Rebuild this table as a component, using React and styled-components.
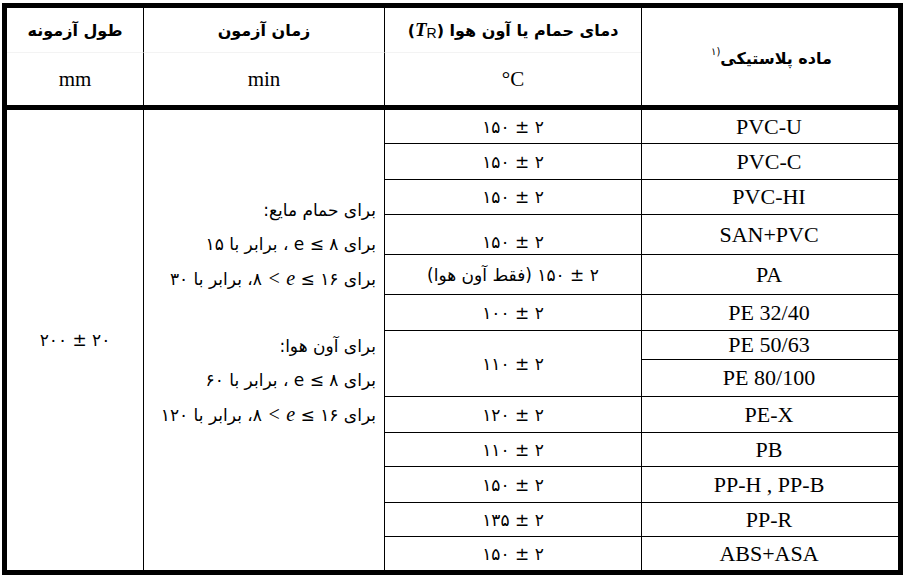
import React from 'react';
import styled, { createGlobalStyle } from 'styled-components';

const GlobalStyle = createGlobalStyle`
  html, body {
    margin: 0;
    padding: 0;
    background: #fff;
  }
`;

const fa = `"DejaVu Sans", "Noto Sans", sans-serif`;
const latin = `"Liberation Serif", "Times New Roman", serif`;

const Page = styled.div`
  padding: 3px 0 0 2px;
`;

const Table = styled.table`
  width: 901px;
  border: 5px solid #000;
  border-spacing: 0;
  border-collapse: separate;
  table-layout: fixed;
  color: #000;
  font-family: ${fa};
`;

const HeadRow = styled.tr`
  height: ${p => p.$h}px;
`;

const HeadCell = styled.th`
  padding: 0;
  box-sizing: border-box;
  border-left: ${p => (p.$edge ? 'none' : '1px solid #000')};
  border-bottom: ${p => (p.$thick ? '5px solid #000' : '1px solid #f3f3f3')};
  text-align: center;
  vertical-align: middle;
  font-family: ${fa};
  font-weight: bold;
  font-size: 16px;
`;

const Unit = styled.span`
  font-family: ${latin};
  font-weight: normal;
  font-size: 21px;
`;

const SymT = styled.span`
  font-family: ${latin};
  font-style: italic;
  font-size: 19px;
`;

const SymSub = styled.sub`
  font-family: "Liberation Sans", Arial, sans-serif;
  font-weight: normal;
  font-size: 14px;
  vertical-align: -2px;
`;

const Note = styled.sup`
  font-size: 10px;
  font-weight: normal;
  vertical-align: 9px;
  margin-left: 3px;
`;

const BodyRow = styled.tr`
  height: ${p => p.$h}px;
`;

const Cell = styled.td`
  padding: 0;
  box-sizing: border-box;
  border-left: ${p => (p.$edge ? 'none' : '1px solid #000')};
  border-bottom: ${p => (p.$last ? 'none' : '1px solid #000')};
  text-align: center;
  vertical-align: middle;
`;

const Material = styled(Cell)`
  font-family: ${latin};
  font-size: 22px;
`;

const Temp = styled(Cell)`
  font-family: ${fa};
  font-size: 17px;
  padding-top: ${p => p.$drop || 0}px;
`;

const TimeCell = styled(Cell)`
  vertical-align: top;
  text-align: right;
  padding: 83px 8px 0 0;
  font-size: 17px;
`;

const Line = styled.div`
  height: 34px;
  line-height: 34px;
  white-space: nowrap;
`;

const Math = styled.span`
  unicode-bidi: isolate;
`;

const E = styled.span`
  font-family: ${p => (p.$italic ? latin : fa)};
  font-style: ${p => (p.$italic ? 'italic' : 'normal')};
  font-size: ${p => (p.$italic ? '20px' : '17px')};
`;

const LengthCell = styled(Cell)`
  font-size: 17px;
`;

const rows = [
  { m: 'PVC-U', t: '۲ ± ۱۵۰', h: 34 },
  { m: 'PVC-C', t: '۲ ± ۱۵۰', h: 36 },
  { m: 'PVC-HI', t: '۲ ± ۱۵۰', h: 35 },
  { m: 'SAN+PVC', t: '۲ ± ۱۵۰', h: 40, drop: 14 },
  { m: 'PA', t: '۲ ± ۱۵۰ (فقط آون هوا)', h: 40 },
  { m: 'PE 32/40', t: '۲ ± ۱۰۰', h: 36 },
  { m: 'PE 50/63', t: '۲ ± ۱۱۰', h: 29, span: 2 },
  { m: 'PE 80/100', h: 37, skip: true },
  { m: 'PE-X', t: '۲ ± ۱۲۰', h: 36 },
  { m: 'PB', t: '۲ ± ۱۱۰', h: 34 },
  { m: 'PP-H , PP-B', t: '۲ ± ۱۵۰', h: 36 },
  { m: 'PP-R', t: '۲ ± ۱۳۵', h: 34 },
  { m: 'ABS+ASA', t: '۲ ± ۱۵۰', h: 33 },
];

function TimeText() {
  return (
    <>
      <Line>برای حمام مایع:</Line>
      <Line>
        برای <Math dir="ltr"><E>e</E> ≤ ۸</Math> ، برابر با ۱۵
      </Line>
      <Line>
        برای <Math dir="ltr">۸ <E $italic>&lt;</E> <E $italic>e</E> ≤ ۱۶</Math>، برابر با ۳۰
      </Line>
      <Line />
      <Line>برای آون هوا:</Line>
      <Line>
        برای <Math dir="ltr"><E>e</E> ≤ ۸</Math> ، برابر با ۶۰
      </Line>
      <Line>
        برای <Math dir="ltr">۸ <E $italic>&lt;</E> <E $italic>e</E> ≤ ۱۶</Math>، برابر با ۱۲۰
      </Line>
    </>
  );
}

export default function App() {
  const n = rows.length;
  return (
    <Page>
      <GlobalStyle />
      <Table dir="rtl">
        <colgroup>
          <col style={{ width: 257 }} />
          <col style={{ width: 257 }} />
          <col style={{ width: 241 }} />
          <col style={{ width: 136 }} />
        </colgroup>
        <thead>
          <HeadRow $h={45}>
            <HeadCell rowSpan={2} $thick>
              ماده پلاستیکی<Note dir="ltr">۱)</Note>
            </HeadCell>
            <HeadCell>
              دمای حمام یا آون هوا{' '}
              <Math dir="ltr">(<SymT>T</SymT><SymSub>R</SymSub>)</Math>
            </HeadCell>
            <HeadCell>زمان آزمون</HeadCell>
            <HeadCell $edge>طول آزمونه</HeadCell>
          </HeadRow>
          <HeadRow $h={57}>
            <HeadCell $thick><Unit dir="ltr">°C</Unit></HeadCell>
            <HeadCell $thick><Unit>min</Unit></HeadCell>
            <HeadCell $thick $edge><Unit>mm</Unit></HeadCell>
          </HeadRow>
        </thead>
        <tbody>
          {rows.map((r, i) => {
            const last = i === n - 1 || (r.span && i + r.span === n);
            return (
              <BodyRow key={r.m} $h={r.h}>
                <Material dir="ltr" $last={i === n - 1}>{r.m}</Material>
                {!r.skip && (
                  <Temp rowSpan={r.span || 1} $last={last} $drop={r.drop}>
                    {r.t}
                  </Temp>
                )}
                {i === 0 && (
                  <>
                    <TimeCell rowSpan={n} $last>
                      <TimeText />
                    </TimeCell>
                    <LengthCell rowSpan={n} $last $edge>
                      ۲۰ ± ۲۰۰
                    </LengthCell>
                  </>
                )}
              </BodyRow>
            );
          })}
        </tbody>
      </Table>
    </Page>
  );
}
